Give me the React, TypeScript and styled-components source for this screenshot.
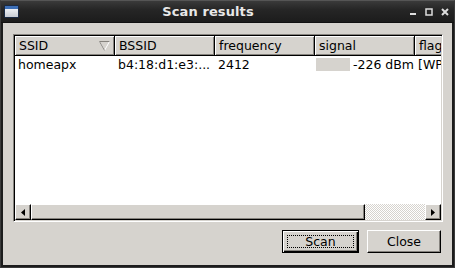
import styled, { createGlobalStyle } from "styled-components";

const Global = createGlobalStyle`
  html, body { margin: 0; padding: 0; background: #1e1e1e; }
  body { font-family: "DejaVu Sans", sans-serif; }
`;

const Window = styled.div`
  width: 455px;
  height: 268px;
  display: flex;
  flex-direction: column;
  background: #1c1c1c;
  box-sizing: border-box;
  border: 1px solid #3a3a3a;
  border-top-color: #555;
`;

const TitleBar = styled.div`
  height: 21px;
  display: flex;
  align-items: center;
  padding: 0 5px 0 3px;
  background: linear-gradient(#3a3a3a, #262626 40%, #1c1c1c);
  border-bottom: 1px solid #111;
`;

const AppIcon = styled.div`
  width: 15px;
  height: 13px;
  border-radius: 1px;
  background: linear-gradient(#3d6fb7 0 3px, #eef0f4 3px, #c8ccd4);
  border: 1px solid #1a2a44;
  box-sizing: border-box;
`;

const Title = styled.div`
  flex: 1;
  text-align: center;
  color: #e8e8e8;
  font-weight: bold;
  font-size: 13px;
  letter-spacing: 0.1px;
  padding-right: 12px;
`;

const Controls = styled.div`
  display: flex;
  align-items: center;
  gap: 8px;
`;

const Body = styled.div`
  flex: 1;
  margin: 0 2px 2px 2px;
  background: #d6d3ce;
  display: flex;
  flex-direction: column;
  padding: 11px 9px 12px 10px;
  gap: 8px;
`;

const Frame = styled.div`
  flex: 1;
  display: flex;
  flex-direction: column;
  border: 1px solid;
  border-color: #86837e #fff #fff #86837e;
  box-shadow: inset 1px 1px 0 #000, inset -1px -1px 0 #d6d3ce;
  padding: 1px;
  background: #fff;
  overflow: hidden;
`;

const Viewport = styled.div`
  flex: 1;
  overflow: hidden;
  font-size: 12.5px;
  color: #000;
`;

const Grid = styled.div`
  display: grid;
  grid-template-columns: 100px 100px 100px 100px 100px;
`;

const HeadCell = styled.div`
  height: 20px;
  box-sizing: border-box;
  background: #d6d3ce;
  border-right: 1px solid #000;
  border-bottom: 1px solid #000;
  box-shadow: inset 1px 1px 0 #fff, inset -1px -1px 0 #86837e;
  padding: 0 4px;
  display: flex;
  align-items: center;
  justify-content: space-between;
  white-space: nowrap;
`;

const Cell = styled.div`
  height: 16px;
  padding: 0 3px;
  display: flex;
  align-items: center;
  gap: 3px;
  white-space: nowrap;
  overflow: hidden;
`;

const SignalBar = styled.div`
  width: 34px;
  height: 13px;
  background: #d6d3ce;
  flex: none;
  margin-left: -2px;
`;

const HScroll = styled.div`
  height: 16px;
  display: flex;
  background: #d6d3ce;
`;

const Arrow = styled.div`
  width: 16px;
  height: 16px;
  box-sizing: border-box;
  border: 1px solid;
  border-color: #fff #000 #000 #fff;
  box-shadow: inset -1px -1px 0 #86837e;
  display: flex;
  align-items: center;
  justify-content: center;
  background: #d6d3ce;
`;

const Thumb = styled.div<{ $w: number }>`
  width: ${(p) => p.$w}px;
  height: 16px;
  box-sizing: border-box;
  border: 1px solid;
  border-color: #fff #000 #000 #fff;
  box-shadow: inset -1px -1px 0 #86837e;
  background: #d6d3ce;
`;

const Trough = styled.div`
  flex: 1;
  background-color: #ebe9e6;
  background-image: repeating-conic-gradient(#d6d3ce 0 25%, #fff 0 50%);
  background-size: 2px 2px;
`;

const Buttons = styled.div`
  display: flex;
  justify-content: flex-end;
  gap: 8px;
  padding-right: 2px;
`;

const Button = styled.div<{ $default?: boolean }>`
  width: ${(p) => (p.$default ? 77 : 74)}px;
  height: 23px;
  box-sizing: border-box;
  display: flex;
  align-items: center;
  justify-content: center;
  font-size: 12.5px;
  background: #d6d3ce;
  border: 1px solid;
  border-color: ${(p) => (p.$default ? "#000" : "#fff #000 #000 #fff")};
  box-shadow: ${(p) =>
    p.$default
      ? "inset 1px 1px 0 #fff, inset -1px -1px 0 #000, inset -2px -2px 0 #86837e"
      : "inset -1px -1px 0 #86837e"};
  position: relative;
`;

const Focus = styled.div`
  position: absolute;
  inset: 4px;
  border: 1px dotted #000;
`;

const SortMark = () => (
  <svg width="11" height="10" viewBox="0 0 11 10">
    <path d="M0.5 0.5 H10.5 L5.5 9.5 Z" fill="none" stroke="#fff" />
    <path d="M0.5 0.5 H10.5 M0.5 0.5 L5.5 9.5" fill="none" stroke="#86837e" />
  </svg>
);

export default function App() {
  return (
    <>
      <Global />
      <Window>
        <TitleBar>
          <AppIcon />
          <Title>Scan results</Title>
          <Controls>
            <svg width="8" height="8" viewBox="0 0 8 8">
              <rect x="1" y="5" width="6" height="2" fill="#ddd" />
            </svg>
            <svg width="8" height="8" viewBox="0 0 8 8">
              <rect x="1" y="1" width="6" height="6" fill="none" stroke="#ddd" strokeWidth="1.5" />
            </svg>
            <svg width="8" height="8" viewBox="0 0 8 8">
              <path d="M1 1 L7 7 M7 1 L1 7" stroke="#ddd" strokeWidth="2" />
            </svg>
          </Controls>
        </TitleBar>
        <Body>
          <Frame>
            <Viewport>
              <Grid>
                <HeadCell>
                  SSID <SortMark />
                </HeadCell>
                <HeadCell>BSSID</HeadCell>
                <HeadCell>frequency</HeadCell>
                <HeadCell>signal</HeadCell>
                <HeadCell>flags</HeadCell>
                <Cell>homeapx</Cell>
                <Cell>b4:18:d1:e3:...</Cell>
                <Cell>2412</Cell>
                <Cell>
                  <SignalBar />
                  -226 dBm
                </Cell>
                <Cell>[WPA2-PSK-CCMP][ESS]</Cell>
              </Grid>
            </Viewport>
            <HScroll>
              <Arrow>
                <svg width="4" height="7" viewBox="0 0 4 7">
                  <path d="M4 0 V7 L0 3.5 Z" fill="#000" />
                </svg>
              </Arrow>
              <Thumb $w={334} />
              <Trough />
              <Arrow>
                <svg width="4" height="7" viewBox="0 0 4 7">
                  <path d="M0 0 V7 L4 3.5 Z" fill="#000" />
                </svg>
              </Arrow>
            </HScroll>
          </Frame>
          <Buttons>
            <Button $default>
              <Focus />
              Scan
            </Button>
            <Button>Close</Button>
          </Buttons>
        </Body>
      </Window>
    </>
  );
}
